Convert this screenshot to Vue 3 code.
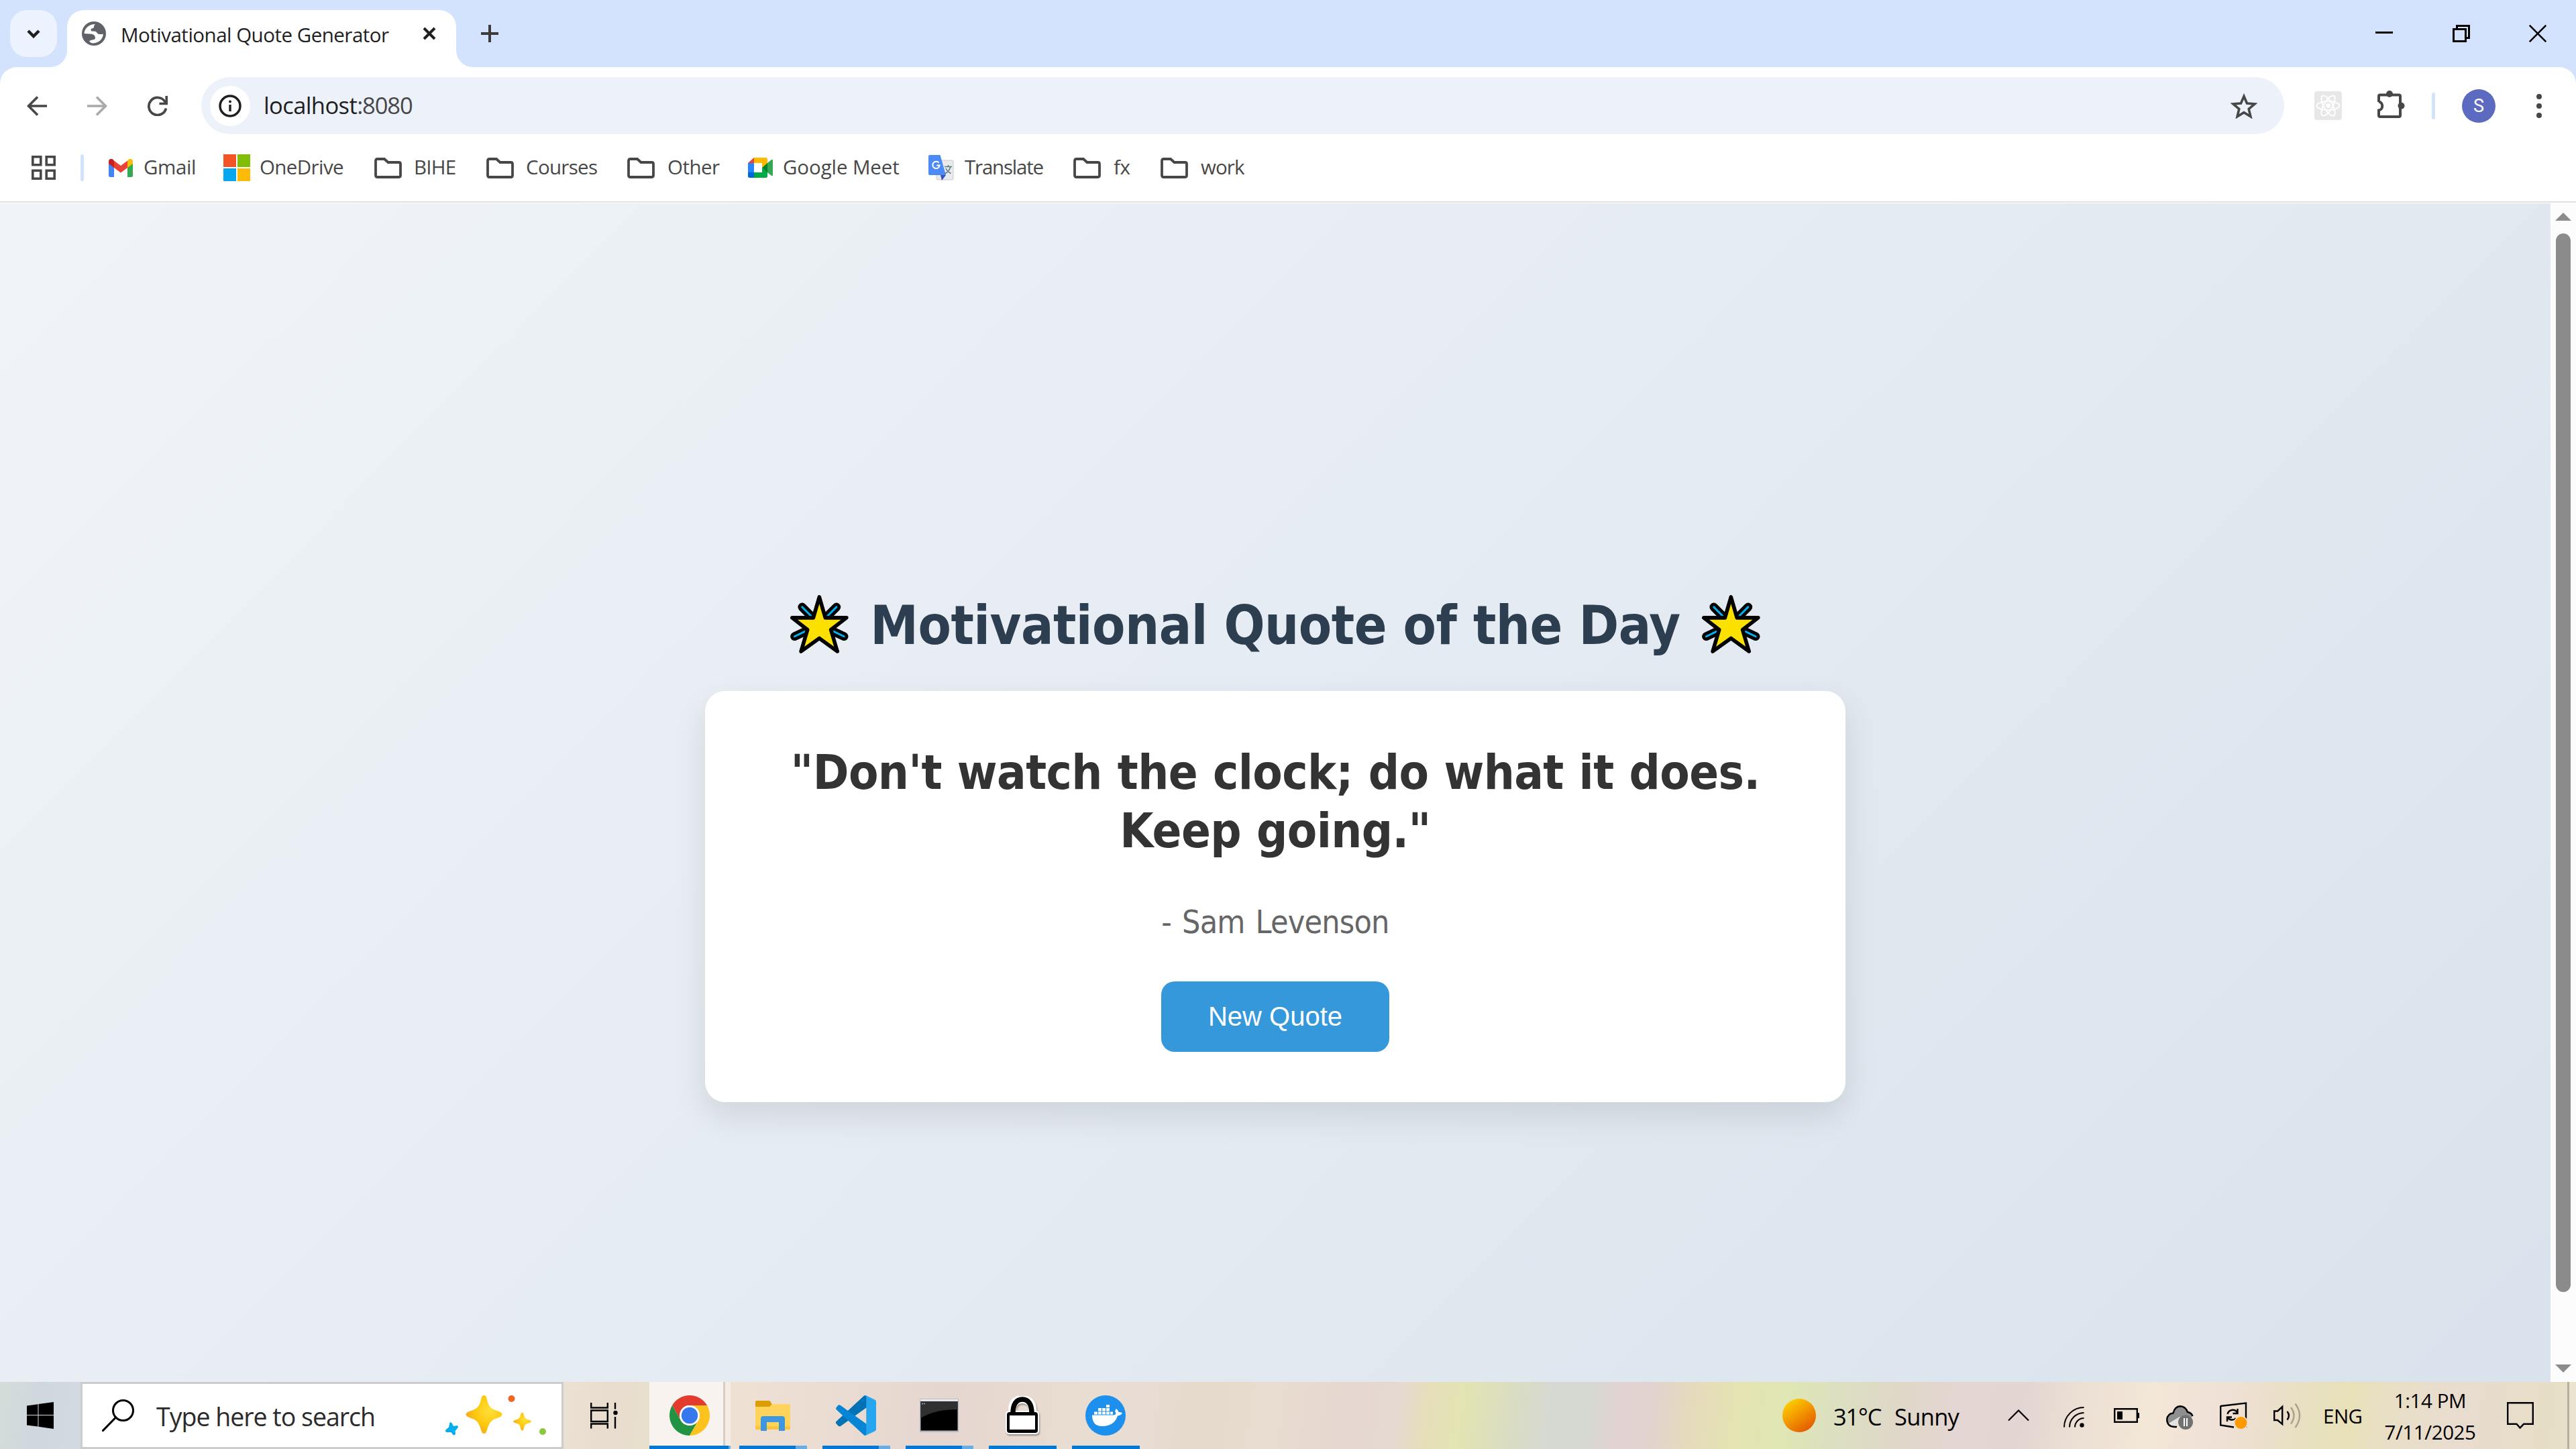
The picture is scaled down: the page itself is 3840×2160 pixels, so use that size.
<script setup>
const bookmarks = [
  { label: 'Gmail', icon: 'gmail', width: 171, text: 52, tracking: -0.4 },
  { label: 'OneDrive', icon: 'microsoft', width: 225, text: 54, tracking: -0.6 },
  { label: 'BIHE', icon: 'folder', width: 167, text: 59, tracking: -0.8 },
  { label: 'Courses', icon: 'folder', width: 210, text: 59, tracking: -0.7 },
  { label: 'Other', icon: 'folder', width: 180, text: 60, tracking: -0.5 },
  { label: 'Google Meet', icon: 'meet', width: 269, text: 52, tracking: -0.1 },
  { label: 'Translate', icon: 'translate', width: 216, text: 54, tracking: -1.2 },
  { label: 'fx', icon: 'folder', width: 130, text: 60, tracking: -0.3 },
  { label: 'work', icon: 'folder', width: 130, text: 60, tracking: -0.9 },
]

const quote = {
  text: '"Don\'t watch the clock; do what it does. Keep going."',
  author: 'Sam Levenson',
}
</script>

<template>
  <div class="screen">
    <header class="tab-strip">
      <button class="tab-search">
        <svg width="20" height="13" viewBox="0 0 20 13"><path d="M2 2l8 8 8-8" fill="none" stroke="#1f1f1f" stroke-width="4.5" /></svg>
      </button>
      <div class="tab">
        <svg class="globe" width="36" height="36" viewBox="0 0 36 36">
          <circle cx="18" cy="18" r="18" fill="#5f6368" />
          <path d="M20 4C11 4 4 10 3.500 18L12 18.500C16 18.500 20 20 20 24.500C20 26.500 18 27.500 15 27.500L11 29C12 31 14 32.500 17 32.500C25 32 31 27 32 18.500C30 19.500 24 19.500 22.500 17C21.500 14.500 19 14.500 14 14.500L13.500 11.500C14 10 18 11 18 8C18 6 19 5 20 4Z" fill="#fff" />
        </svg>
        <span class="tab-title">Motivational Quote Generator</span>
        <svg class="tab-close" width="20" height="20" viewBox="0 0 20 20"><path d="M2 2l16 16M18 2L2 18" stroke="#1f1f1f" stroke-width="4" /></svg>
      </div>
      <svg class="new-tab" width="26" height="26" viewBox="0 0 26 26"><path d="M13 0v26M0 13h26" stroke="#3c3c3c" stroke-width="4" /></svg>
      <div class="window-controls">
        <svg width="26" height="26" viewBox="0 0 26 26"><path d="M0 11.500h26" stroke="#000" stroke-width="3" /></svg>
        <svg width="26" height="26" viewBox="0 0 26 26"><path d="M1.500 6.500h18v18h-18zM6.500 6V1.500h18v18H20" fill="none" stroke="#000" stroke-width="3" /></svg>
        <svg width="26" height="26" viewBox="0 0 26 26"><path d="M.7.7l24.600 24.600M25.300.7L.7 25.300" stroke="#000" stroke-width="2.600" /></svg>
      </div>
    </header>

    <div class="chrome-frame">
      <div class="toolbar">
        <nav class="nav-icons">
          <svg width="30" height="30" viewBox="0 0 30 30"><path d="M30 15H3M16 1.500L2.500 15 16 28.500" fill="none" stroke="#474747" stroke-width="3.600" /></svg>
          <svg width="30" height="30" viewBox="0 0 30 30"><path d="M0 15h27M14 1.500L27.500 15 14 28.500" fill="none" stroke="#a9a9a9" stroke-width="3.600" /></svg>
          <svg width="30" height="30" viewBox="0 0 30 30"><path d="M27.500 18.500A13 13 0 1 1 25.500 8L28 11" fill="none" stroke="#474747" stroke-width="3.700" /><path d="M28.200 0v11.500H17.500" fill="none" stroke="#474747" stroke-width="3.600" /></svg>
        </nav>
        <div class="omnibox">
          <span class="site-info">
            <svg width="34" height="34" viewBox="0 0 34 34"><circle cx="17" cy="17" r="15" fill="none" stroke="#1f1f1f" stroke-width="3.500" /><path d="M17 15v10" stroke="#1f1f1f" stroke-width="3.400" /><circle cx="17" cy="10.500" r="2" fill="#1f1f1f" /></svg>
          </span>
          <span class="url"><span class="host">localhost</span><span class="port">:8080</span></span>
          <svg class="star" width="40" height="38" viewBox="0 0 40 38"><path d="M20 4.500l4.500 10.500 11.500 1-8.800 7.500 2.700 11.200L20 28.700 10.100 34.700l2.700-11.200L4 16l11.500-1z" fill="none" stroke="#474747" stroke-width="3.600" /></svg>
        </div>
        <svg class="ext-react" width="41" height="43" viewBox="0 0 41 43">
          <rect width="41" height="43" rx="4" fill="#e7e7e7" />
          <g fill="none" stroke="#fff" stroke-width="2">
            <ellipse cx="20.500" cy="21.500" rx="17" ry="6.500" />
            <ellipse cx="20.500" cy="21.500" rx="17" ry="6.500" transform="rotate(60 20.500 21.500)" />
            <ellipse cx="20.500" cy="21.500" rx="17" ry="6.500" transform="rotate(120 20.500 21.500)" />
          </g>
          <circle cx="20.500" cy="21.500" r="3.500" fill="#fff" />
        </svg>
        <svg class="ext-puzzle" width="41" height="41" viewBox="0 0 41 41">
          <path d="M2 17V8.500Q2 6.500 4 6.500H32Q34 6.500 34 8.500V37Q34 39 32 39H4Q2 39 2 37V29.500C9 28.500 9 17.500 2 16.500Z" fill="none" stroke="#474747" stroke-width="4" />
          <circle cx="18" cy="5" r="5" fill="#474747" /><circle cx="35.500" cy="22.700" r="5" fill="#474747" />
        </svg>
        <i class="divider"></i>
        <span class="avatar">S</span>
        <svg class="kebab" width="8" height="36" viewBox="0 0 8 36" fill="#474747"><circle cx="4" cy="4" r="4" /><circle cx="4" cy="18" r="4" /><circle cx="4" cy="32" r="4" /></svg>
      </div>

      <div class="bookmarks">
        <svg class="apps" width="36" height="36" viewBox="0 0 36 36" fill="none" stroke="#474747" stroke-width="3.600">
          <path d="M1.800 1.800h12v12h-12zM22.200 1.800h12v12h-12zM1.800 22.200h12v12h-12zM22.200 22.200h12v12h-12z" />
        </svg>
        <i class="divider"></i>
        <a v-for="b in bookmarks" :key="b.label" class="bookmark" :style="{ width: b.width + 'px' }">
          <span class="bookmark-icon" :style="{ width: b.text + 'px' }">
            <svg v-if="b.icon === 'gmail'" width="36" height="27" viewBox="0 0 36 27">
              <path d="M0 3v21.500A2.500 2.500 0 0 0 2.500 27H8V11z" fill="#4285f4" />
              <path d="M36 3v21.500a2.500 2.500 0 0 1-2.500 2.500H28V11z" fill="#34a853" />
              <path d="M28 2.500V13l8-6V3.500C36 0 32-1.200 29.500.8z" fill="#fbbc04" />
              <path d="M8 13V2.500l10 7.500 10-7.500V13l-10 7.500z" fill="#ea4335" />
              <path d="M0 3.500V7l8 6V2.500L6.500.8C4-1.200 0 0 0 3.500z" fill="#c5221f" />
            </svg>
            <svg v-else-if="b.icon === 'microsoft'" width="40" height="40" viewBox="0 0 40 40">
              <path d="M0 0h19v19H0z" fill="#f35325" /><path d="M21 0h19v19H21z" fill="#81bc06" />
              <path d="M0 21h19v19H0z" fill="#05a6f0" /><path d="M21 21h19v19H21z" fill="#ffba08" />
            </svg>
            <svg v-else-if="b.icon === 'folder'" width="41" height="31" viewBox="0 0 41 31">
              <path d="M2 26V4.500Q2 2 4.500 2H15l5.500 5H36.500Q39 7 39 9.500V26.500Q39 29 36.500 29H4.500Q2 29 2 26.500Z" fill="none" stroke="#474747" stroke-width="3.800" />
            </svg>
            <svg v-else-if="b.icon === 'meet'" width="37" height="30" viewBox="0 0 37 30">
              <path d="M9 0v8H0z" fill="#ea4335" /><path d="M0 8h9v14H0z" fill="#2684fc" />
              <path d="M0 22h9v8H2.500A2.500 2.500 0 0 1 0 27.500z" fill="#0066da" />
              <path d="M9 0h17.500A2.500 2.500 0 0 1 29 2.500V9l-8 6V8H9z" fill="#ffba00" />
              <path d="M9 22h12v-7l8 6v6.500a2.500 2.500 0 0 1-2.500 2.500H9z" fill="#00ac47" />
              <path d="M21 15l8-7v14z" fill="#00832d" /><path d="M29 8l5.500-4.500Q37 2 37 4v22q0 2-2.500.5L29 22z" fill="#34a853" />
            </svg>
            <svg v-else width="38" height="38" viewBox="0 0 38 38">
              <rect x="12" y="8" width="25" height="29" rx="2" fill="#e8eaec" stroke="#c9ccd0" />
              <path d="M18 30h8l-6 8z" fill="#3a4fc0" />
              <path d="M2 0h15.500l8.500 30H2a2 2 0 0 1-2-2V2a2 2 0 0 1 2-2z" fill="#4c8bf5" />
              <path d="M15.500 11.500a5.200 5.200 0 1 0 1.200 4h-4.500" fill="none" stroke="#fff" stroke-width="2" />
              <path d="M24 17.500h11M29.500 15v2.500M33 17.500q-2 7-8.500 10.500M26 20q2.500 5 7.500 7.500" fill="none" stroke="#607988" stroke-width="1.600" />
            </svg>
          </span>
          <span class="bookmark-label" :style="{ letterSpacing: b.tracking + 'px' }">{{ b.label }}</span>
        </a>
      </div>
    </div>

    <div class="viewport">
      <main class="page">
        <h1 class="heading">
          <svg v-for="side in 2" :key="side" class="glow-star" :class="{ last: side === 2 }" width="87" height="87" viewBox="54 50 261 262">
            <g stroke-linecap="round" fill="none">
              <path d="M107 104l34 34M261 104l-34 34M73 236l46-22M295 236l-46-22" stroke="#000" stroke-width="38" />
              <path d="M107 104l40 40M261 104l-40 40M73 236l46-22M295 236l-46-22" stroke="#00b3f0" stroke-width="9" />
            </g>
            <path d="M184 59L211 152H306L236 206L265 303L184 244L102 303L131 206L62 152H157Z" fill="#fce000" stroke="#000" stroke-width="17" stroke-linejoin="round" />
          </svg>
          <span class="heading-text">Motivational Quote of the Day</span>
        </h1>
        <section class="card">
          <h2 class="quote">{{ quote.text }}</h2>
          <p class="author">- {{ quote.author }}</p>
          <button class="new-quote">New Quote</button>
        </section>
      </main>
      <aside class="scrollbar">
        <svg width="24" height="12" viewBox="0 0 24 12"><path d="M12 0l12 12H0z" fill="#8b8b8b" /></svg>
        <i class="thumb"></i>
        <svg width="24" height="12" viewBox="0 0 24 12"><path d="M12 12L0 0h24z" fill="#8b8b8b" /></svg>
      </aside>
    </div>

    <footer class="taskbar">
      <div class="start">
        <svg width="40" height="40" viewBox="0 0 40 40"><path d="M0 5.500l16.500-2.300V19H0zM17.500 3L40 0v19H17.500zM0 20h16.500v16.500L0 34.500zM17.500 20H40v20l-22.500-3.200z" /></svg>
      </div>
      <div class="search">
        <svg class="magnifier" width="48" height="48" viewBox="0 0 48 48"><circle cx="31.500" cy="16.500" r="15" fill="none" stroke="#000" stroke-width="3" /><path d="M20.500 27L1.500 46.500" stroke="#000" stroke-width="3.200" stroke-linecap="round" /></svg>
        <span class="search-text">Type here to search</span>
        <svg class="sparkles" width="152" height="60" viewBox="0 0 152 60">
          <defs>
            <radialGradient id="gold" cx=".65" cy=".4" r=".65"><stop offset="0" stop-color="#ffe03a" /><stop offset=".6" stop-color="#fdc90f" /><stop offset="1" stop-color="#f7ab1e" /></radialGradient>
          </defs>
          <path d="M58.500 0Q61.500 0 62.500 4C65 16 68 20 78 23C88 26 88 31 78 34C68 37 66 42 62.500 53Q61.500 57 58.500 57Q55.500 57 54.500 53C51 42 49 37 39 34C29 31 29 26 39 23C49 20 52 16 54.500 4Q55.500 0 58.500 0Z" fill="url(#gold)" />
          <path d="M115.500 25.500Q117 25.500 118 29C119 33 120 35 125 36.500C130 38 130 40 125 41.500C120 43 119 44 118 49Q117 52.500 115.500 52.500Q114 52.500 113 49C112 44 111 43 106 41.500C101 40 101 38 106 36.500C111 35 112 33 113 29Q114 25.500 115.500 25.500Z" fill="url(#gold)" />
          <path d="M7.500 40.500Q9.500 39.500 11 42L13 46L18.500 45Q21 46 19 49L15.500 53L16 57.500Q15 60 12.500 59L9.500 55L3 55Q-.5 53.500 2 51L6 47.500Z" fill="#00adef" />
          <circle cx="99.500" cy="5" r="5" fill="#f26522" /><circle cx="146" cy="54" r="5" fill="#8dc63f" />
        </svg>
      </div>
      <div class="task-view">
        <svg width="41" height="39" viewBox="0 0 41 39" fill="none" stroke="#000" stroke-width="2.400"><path d="M1.200 0v7.500h24.600V0M1.200 11.500h24.600v16.500H1.200zM1.200 38.500V31.500h24.600v7M37 0v9.500M37 21v17.500" /><circle cx="37.500" cy="15" r="3.200" fill="#000" stroke="none" /></svg>
      </div>
      <div class="apps-row">
        <div class="app active">
          <svg width="60" height="60" viewBox="0 0 48 48">
            <path d="M24 12H44.780A24 24 0 0 0 3.220 12L13.600 30A12 12 0 0 1 24 12" fill="#e33b2e" />
            <path d="M34.390 30L24 48A24 24 0 0 1 3.220 12L13.600 30A12 12 0 0 0 34.390 30" fill="#229342" />
            <path d="M34.390 30L24 48A24 24 0 0 0 44.780 12H24A12 12 0 0 1 34.390 30" fill="#fcc31e" />
            <circle cx="24" cy="24" r="12" fill="#fff" /><circle cx="24" cy="24" r="9.800" fill="#3578ee" />
          </svg>
        </div>
        <div class="app grouped">
          <svg width="52" height="45" viewBox="0 0 52 45">
            <path d="M0 2a2 2 0 0 1 2-2h18q2 0 3 2l2 4-4 6H0z" fill="#dd9c00" />
            <path d="M0 9h20q2 0 3-2 1-2 3-2h24a2 2 0 0 1 2 2v34a2 2 0 0 1-2 2H2a2 2 0 0 1-2-2z" fill="#ffd35c" />
            <path d="M0 38h52v3a2 2 0 0 1-2 2H2a2 2 0 0 1-2-2z" fill="#fbc53a" />
            <path d="M8 45V27q0-4 4-4h28q4 0 4 4v18h-9V32H17v13z" fill="#3c97df" />
          </svg>
        </div>
        <div class="app grouped">
          <svg width="60" height="60" viewBox="0 0 60 60">
            <path d="M43 0L46 1V18L7 46Q5 47 3 45L0 41.500Q-.5 40 1 38.500L41 1.500Q42 .5 43 0Z" fill="#0072b5" />
            <path d="M3 15Q5 13.500 7 15L46 43V59L43 60Q42 59.500 41 58.500L1 21.500Q-.5 20 .5 18.500Z" fill="#0585d3" />
            <path d="M45 .3L58 6.500Q60 7.500 60 9.500V50.500Q60 52.500 58 53.500L44 60Q45.300 59 45.300 57V3Q45.300 1 43 0Z" fill="#25a6ef" />
          </svg>
        </div>
        <div class="app grouped">
          <svg width="58" height="50" viewBox="0 0 58 50">
            <rect width="58" height="50" fill="#b5b9c1" /><rect x="1" y="1" width="56" height="2.500" fill="#eceff4" />
            <rect x="1.500" y="4" width="55" height="43.500" fill="#000" />
            <path d="M1.500 4h55v12Q22 16 1.500 29z" fill="#303030" /><path d="M3 7.500h6" stroke="#aaa" stroke-width="1.500" stroke-dasharray="2 1" />
          </svg>
        </div>
        <div class="app">
          <svg class="lock" width="52" height="58" viewBox="0 0 52 58">
            <path d="M11 25V17C11 6 18 2 26 2S41 6 41 17V25" fill="none" stroke="#fff" stroke-width="12" transform="translate(0 3)" />
            <rect x="1" y="22" width="50" height="35" rx="5" fill="#fff" />
            <rect x="3" y="24" width="46" height="31" rx="4" fill="#000" /><rect x="7" y="29" width="38" height="21" fill="#fff" />
            <path d="M12 26C12 12 17 5 26 5S40 12 40 26" fill="none" stroke="#000" stroke-width="7.500" />
          </svg>
        </div>
        <div class="app">
          <svg width="60" height="60" viewBox="0 0 60 60">
            <circle cx="30" cy="30" r="30" fill="#1d90ee" />
            <path d="M10 29.500H42Q45 29 45.500 27Q43 23 46 20Q49 22 49.500 25Q53 24.500 55 26.500Q53 30 48 30.500Q43 46 25 46Q10 46 10 29.500Z" fill="#fff" />
            <path d="M13 24.500h5v4h-5zM19 24.500h5v4h-5zM25 24.500h5v4h-5zM31 24.500h5v4h-5zM37 24.500h4v4h-4zM19 19h5v4.500h-5zM25 19h5v4.500h-5zM31 19h5v4.500h-5zM31 14h5v4h-5z" fill="#fff" />
          </svg>
        </div>
      </div>

      <div class="tray">
        <div class="weather">
          <i class="sun"></i><span class="temp">31°C</span><span class="sky">Sunny</span>
        </div>
        <svg width="32" height="18" viewBox="0 0 32 18"><path d="M1 16.500L16 1.500l15 15" fill="none" stroke="#000" stroke-width="2.200" /></svg>
        <svg class="wifi" width="31" height="31" viewBox="0 0 31 31" fill="none" stroke="#000" stroke-width="2"><path d="M1 30.500A29.500 29.500 0 0 1 30.500 1M9 30.500A21.500 21.500 0 0 1 30.500 9M17 30.500A13.500 13.500 0 0 1 30.500 17" /><circle cx="27.500" cy="27.500" r="3.200" fill="#000" stroke="none" /></svg>
        <svg width="38" height="22" viewBox="0 0 38 22"><path d="M1.200 1.200h33.600v19.600H1.200z" fill="none" stroke="#000" stroke-width="2.400" /><path d="M5 5h8v12H5zM35 7h3v8h-3z" /></svg>
        <svg class="cloud" width="41" height="36" viewBox="0 0 41 36">
          <path d="M10 31.500Q1 30 1.200 21Q2 12.500 10.500 11.500Q13 1.500 21 1.200Q29 1.500 32 9.500Q38 10.500 39 17L20 32Z" fill="#8f8f8f" />
          <path d="M3.500 27L20 17L30 25L18 31.500H9Q5 30.500 3.500 27Z" fill="#e3e3e3" />
          <path d="M16 32H12Q1.500 31.500 1.200 21Q2 12.500 10.500 11.500Q13 1.500 21 1.200Q29 1.500 32 10Q38 11 39.500 16" fill="none" stroke="#000" stroke-width="2.400" />
          <ellipse cx="29" cy="28" rx="12.500" ry="14" fill="#f0e2d6" /><circle cx="29" cy="25" r="11" fill="#727272" /><path d="M27 19v12M31 19v12" stroke="#fff" stroke-width="2" />
        </svg>
        <svg width="41" height="40" viewBox="0 0 41 40">
          <path d="M1.200 6L39 1.500V38M1.200 5.500V34.500L21 37.500" fill="none" stroke="#000" stroke-width="2.400" />
          <path d="M11.500 18A8 8 0 0 1 26 15.500M26.500 10v7h-7M24 24A8 8 0 0 1 11.500 23M11 29v-6.500h7" fill="none" stroke="#000" stroke-width="2.400" />
          <circle cx="31.500" cy="31" r="10.500" fill="#eadfcd" /><circle cx="31.500" cy="31" r="9" fill="#ff9900" />
        </svg>
        <svg width="41" height="38" viewBox="0 0 41 38" fill="none" stroke="#000" stroke-width="2.400"><path d="M1.200 12.500h5l7-6.500v26l-7-6H1.200z" /><path d="M20.500 13q5 6 0 12.500" /><g stroke="#a89f8d"><path d="M26 7q9 12 0 24.500M32.500 1.500q13 17.500 0 35.500" /></g></svg>
        <span class="lang">ENG</span>
        <div class="clock"><span>1:14 PM</span><span>7/11/2025</span></div>
        <svg width="40" height="40" viewBox="0 0 40 40"><path d="M1.200 1.200h37.600v31.600H25L19.600 38.500 14.500 32.800H1.200z" fill="none" stroke="#000" stroke-width="2.400" /></svg>
        <i class="show-desktop"></i>
      </div>
    </footer>
  </div>
</template>

<style>
body { margin: 0; overflow: hidden; }
</style>

<style scoped>
.screen {
  width: 3840px; height: 2160px; display: flex; flex-direction: column;
  overflow: hidden; background: #d3e3fd; font-family: "Open Sans", "Noto Sans", sans-serif;
}
svg { display: block; flex: none; }
button { border: 0; padding: 0; }

/* Tab strip */
.tab-strip { height: 100px; flex: none; display: flex; align-items: flex-start; }
.tab-search {
  width: 70px; height: 70px; margin: 15px 15px 0; border-radius: 25px; background: #edf3fe;
  display: flex; align-items: center; justify-content: center;
}
.tab {
  position: relative; width: 580px; height: 85px; margin-top: 15px; box-sizing: border-box;
  padding: 0 30px 15px 22px; display: flex; align-items: center;
  background: #fff; border-radius: 25px 25px 0 0;
}
.tab::before, .tab::after { content: ""; position: absolute; bottom: 0; width: 25px; height: 25px; }
.tab::before { left: -25px; background: radial-gradient(circle at 0 0, transparent 24.5px, #fff 25.5px); }
.tab::after { right: -25px; background: radial-gradient(circle at 100% 0, transparent 24.5px, #fff 25.5px); }
.tab-title {
  margin: 3px auto 0 22px; font-size: 29.5px; letter-spacing: -0.5px; line-height: 40px;
  color: #1f1f1f; white-space: nowrap;
}
.new-tab { margin: 37px 0 0 37px; }
.window-controls { margin: 37px 0 0 auto; width: 344px; display: grid; grid-template-columns: 115px 115px 114px; justify-items: center; }

/* Toolbar */
.chrome-frame { height: 200px; flex: none; background: #fff; border-radius: 25px 25px 0 0; }
.toolbar { height: 115px; display: flex; align-items: center; padding-left: 40px; }
.nav-icons { display: flex; gap: 60px; width: 260px; }
.omnibox { width: 3105px; height: 85px; border-radius: 43px; background: #edf1fa; display: flex; align-items: center; }
.site-info { width: 60px; height: 60px; margin-left: 13px; border-radius: 50%; background: #fff; display: flex; align-items: center; justify-content: center; }
.url { margin: -1px auto 0 20px; font-size: 34.5px; line-height: 50px; }
.host { color: #1f1f1f; letter-spacing: -0.6px; }
.port { color: #474747; letter-spacing: -1.1px; }
.star { margin-right: 40px; }
.ext-react { margin-left: 45px; }
.ext-puzzle { margin: -5px 0 0 53px; }
.divider { width: 5px; height: 40px; border-radius: 3px; background: #d3e3fd; }
.toolbar .divider { margin-left: 40px; }
.avatar {
  width: 50px; height: 50px; margin-left: 40px; border-radius: 50%; background: #5c6bc0; color: #fff;
  font: 27px/51px Roboto, sans-serif; text-align: center;
}
.kebab { margin-left: 61px; }

/* Bookmarks */
.bookmarks { height: 70px; display: flex; align-items: center; padding-left: 47px; }
.bookmarks .divider { margin: 0 37px; }
.bookmark { display: flex; align-items: center; flex: none; }
.bookmark-icon { flex: none; }
.bookmark-label { margin-top: -3px; font-size: 29.5px; line-height: 40px; color: #474747; white-space: nowrap; }

/* Web page */
.viewport { height: 1760px; flex: none; box-sizing: border-box; border-top: 2px solid #dfe2df; display: flex; padding-top: 1px; overflow: hidden; background: #fff; }
.page {
  width: 3802px; height: 1856px; flex: none; box-sizing: border-box; padding-top: 581px;
  background: linear-gradient(135deg, #f0f4f8, #d9e2ec);
  font-family: "DejaVu Sans Condensed", "DejaVu Sans", sans-serif; font-stretch: condensed;
  display: flex; flex-direction: column; align-items: center;
}
.heading { margin: 0; height: 97px; display: flex; align-items: center; gap: 32px; font-size: 80px; line-height: 97px; color: #2c3e50; }
.heading-text { letter-spacing: -0.5px; }
.glow-star { margin-top: -4px; }
.glow-star.last { order: 1; }
.card {
  width: 1700px; height: 613px; box-sizing: border-box; margin-top: 49px; padding: 78px 100px 75px;
  border-radius: 30px; background: #fff; box-shadow: 0 20px 50px rgba(0, 0, 0, .1); text-align: center;
}
.quote { margin: 0; font-size: 72px; line-height: 87px; letter-spacing: -0.6px; word-spacing: 1px; color: #333; }
.author { margin: 63px 0 60px; font-size: 48px; line-height: 58px; letter-spacing: -0.8px; word-spacing: 3px; color: #666; }
.new-quote {
  width: 340px; height: 105px; border-radius: 20px; background: #3498db; color: #fff;
  font: 40px "Liberation Sans", Arial, sans-serif;
}
.scrollbar { width: 38px; height: 1757px; box-sizing: border-box; padding: 14px 0; background: #fcfcfc; display: flex; flex-direction: column; align-items: center; }
.thumb { width: 22px; height: 1578px; margin: 19px 0 auto; border-radius: 11px; background: #8b8b8b; }

/* Taskbar */
.taskbar {
  height: 100px; flex: none; display: flex; color: #000;
  background: linear-gradient(98deg, #d3ddd8 0, #cfd7de 60px, #d2d9e0 120px, #ebe1d2 840px, #e8dccf 900px, #e8dfcc 968px, #efe0d4 1100px, #e5d7d0 1400px, #e9dcd0 1600px, #e9dcd4 1690px, #e5dacb 1780px, #e9dcd0 1870px, #e6d8d0 1980px, #e6d9d1 2070px, #e6dfba 2112px, #e3e4b3 2165px, #d9dcc4 2245px, #d6d9d1 2295px, #d6d8d2 2350px, #e2d2d1 2400px, #e1d2cf 2440px, #e6dabd 2500px, #e4e4b2 2570px, #dfe6b4 2650px, #dce0c0 2710px, #dfd7c8 2810px, #e4d6d2 2890px, #e3d6d2 2990px, #ecdfd4 3075px, #f3e7d7 3180px, #f0e1d7 3285px, #eadfc9 3365px, #e7e0bf 3425px, #e8e1b8 3475px, #e8dfc5 3525px, #e8dccf 3635px, #e7dec6 3780px);
}
.start { width: 120px; display: flex; align-items: center; justify-content: center; }
.search { width: 720px; box-sizing: border-box; border: 3px solid #ccc; background: #fff; display: flex; align-items: center; padding: 0 22px 0 29px; }
.search-text { margin: 3px auto 0 33px; font-size: 37.5px; line-height: 50px; letter-spacing: -1px; color: #2b2b2b; white-space: nowrap; }
.task-view { width: 128px; box-sizing: border-box; padding-right: 7px; display: flex; align-items: center; justify-content: center; }
.apps-row { display: flex; }
.app {
  width: 101px; height: 100px; box-sizing: border-box; margin-right: 23px; border-bottom: 5px solid #0078d7;
  padding: 5px 2px 0 0; display: flex; align-items: center; justify-content: center;
}
.app.grouped { border-image: linear-gradient(90deg, #0078d7 81px, #67aee7 81px) 5; }
.app.active {
  width: 121px; margin-right: 13px; border-image: linear-gradient(90deg, #0078d7 113px, #67aee7 113px) 5;
  background: linear-gradient(90deg, #f8f3ef 110px, #d9cdc3 110px 113px, #f5ece5 113px);
}
.lock { filter: drop-shadow(1px 2px 1px rgba(0, 0, 0, .35)); }
.tray {
  margin-left: auto; width: 1183px; display: grid; align-items: center; justify-items: start;
  grid-template-columns: 336px 83px 75px 78px 80px 80px 74px 87px 187px 90px 13px;
}
.weather { display: flex; align-items: center; font-size: 34.5px; line-height: 50px; }
.sun { width: 50px; height: 50px; border-radius: 50%; background: linear-gradient(145deg, #ffd800 5%, #f29400 50%, #e04f00 95%); }
.temp { width: 91px; margin: 3px 0 0 26px; letter-spacing: -1.2px; }
.sky { margin-top: 3px; letter-spacing: -0.7px; }
.wifi { margin-top: 4px; }
.cloud { margin-top: 6px; }
.lang { font-size: 29.5px; letter-spacing: -0.5px; }
.clock { width: 145px; display: flex; flex-direction: column; align-items: center; font-size: 29.5px; line-height: 47px; letter-spacing: -0.4px; padding-top: 2px; }
.show-desktop { width: 10px; height: 100px; border-left: 3px solid #b9afa0; background: rgba(255, 255, 255, .15); }
</style>
